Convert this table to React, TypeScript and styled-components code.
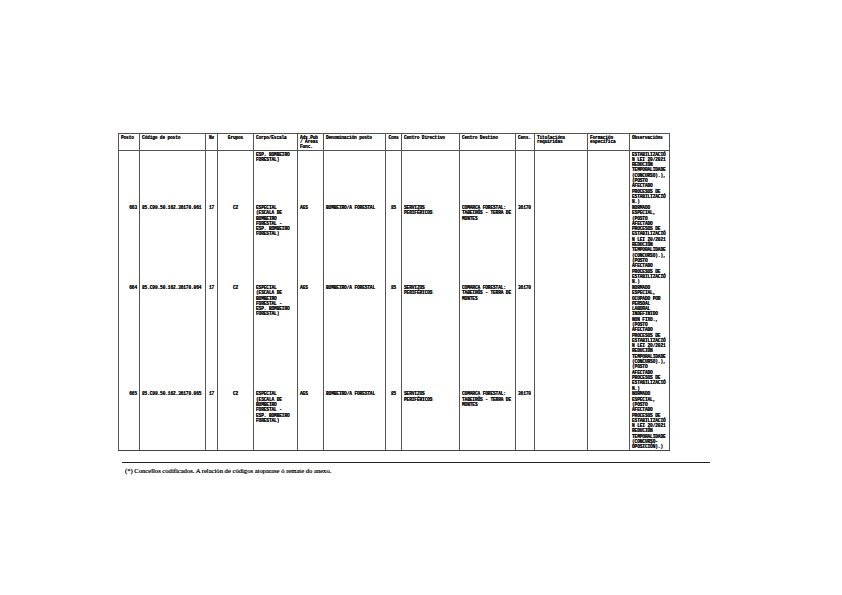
import React from 'react';
import styled, { createGlobalStyle } from 'styled-components';

const GlobalStyle = createGlobalStyle`
  html, body {
    margin: 0;
    padding: 0;
    background: #ffffff;
  }
`;

const Page = styled.div`
  width: 842px;
  height: 595px;
  box-sizing: border-box;
  padding: 133px 0 0 118px;
  background: #ffffff;
  overflow: hidden;
`;

const Table = styled.table`
  border-collapse: collapse;
  table-layout: fixed;
  width: 551px;
  font-family: "Liberation Mono", "Courier New", monospace;
  font-weight: bold;
  color: #111;
  text-shadow: 0 0 0.3px #000;
`;

const HeadCell = styled.th<{ $align?: string }>`
  border: 1px solid #555;
  border-bottom-width: 1.5px;
  height: 17px;
  box-sizing: border-box;
  padding: 1.5px 2px 0;
  vertical-align: top;
  text-align: ${({ $align }) => $align || 'left'};
  font-size: 4.5px;
  line-height: 4.7px;
  letter-spacing: -0.15px;
  font-weight: bold;
  white-space: pre;
  overflow: hidden;
`;

const Cell = styled.td<{ $align?: string; $last?: boolean }>`
  border-left: 1px solid #555;
  border-right: 1px solid #555;
  border-bottom: ${({ $last }) => ($last ? '1.5px solid #444' : 'none')};
  padding: 0.5px 2px 0;
  vertical-align: top;
  text-align: ${({ $align }) => $align || 'left'};
  font-size: 4.5px;
  line-height: 5.3px;
  letter-spacing: -0.12px;
  white-space: pre;
  overflow: hidden;
`;

const Footer = styled.div`
  width: 585px;
  margin: 11px 0 0 4px;
  border-top: 1.5px solid #222;
  padding: 4px 0 0 3px;
  font-family: "Liberation Serif", "Times New Roman", serif;
  font-size: 6.6px;
  color: #111;
  text-shadow: 0 0 0.2px #111;
`;

const columns = [
  { label: 'Posto', width: 21, align: 'left', cellAlign: 'right' },
  { label: 'Código de posto', width: 66 },
  { label: 'Nv', width: 12, align: 'center', cellAlign: 'center' },
  { label: 'Grupos', width: 36, align: 'center', cellAlign: 'center' },
  { label: 'Corpo/Escala', width: 44 },
  { label: 'Adx.Pub\n/ Áreas\nFunc.', width: 26 },
  { label: 'Denominación posto', width: 62 },
  { label: 'Cons', width: 16, align: 'center', cellAlign: 'center' },
  { label: 'Centro Directivo', width: 58 },
  { label: 'Centro Destino', width: 56 },
  { label: 'Cens.', width: 19 },
  { label: 'Titulacións\nrequiridas', width: 53 },
  { label: 'Formación\nespecífica', width: 42 },
  { label: 'Observacións', width: 40 },
];

const corpo = 'ESPECIAL\n(ESCALA DE\nBOMBEIRO\nFORESTAL -\nESP. BOMBEIRO\nFORESTAL)';
const destino = 'COMARCA FORESTAL:\nTABEIRÓS - TERRA DE\nMONTES';

const row = (posto: string, code: string, obs: string) => [
  posto,
  `85.C99.50.162.36170.${code}`,
  '17',
  'C2',
  corpo,
  'AGS',
  'BOMBEIRO/A FORESTAL',
  '85',
  'SERVIZOS\nPERIFÉRICOS',
  destino,
  '36170',
  '',
  '',
  obs,
];

const rows: string[][] = [
  [
    '', '', '', '', 'ESP. BOMBEIRO\nFORESTAL)', '', '', '', '', '', '', '', '',
    'ESTABILIZACIÓ\nN LEI 20/2021\nREDUCIÓN\nTEMPORALIDADE\n(CONCURSO).),\n(POSTO\nAFECTADO\nPROCESOS DE\nESTABILIZACIÓ\nN.)',
  ],
  row(
    '663',
    '061',
    'NORMADO\nESPECIAL,\n(POSTO\nAFECTADO\nPROCESOS DE\nESTABILIZACIÓ\nN LEI 20/2021\nREDUCIÓN\nTEMPORALIDADE\n(CONCURSO).),\n(POSTO\nAFECTADO\nPROCESOS DE\nESTABILIZACIÓ\nN.)'
  ),
  row(
    '664',
    '064',
    'NORMADO\nESPECIAL,\nOCUPADO POR\nPERSOAL\nLABORAL\nINDEFINIDO\nNON FIXO.,\n(POSTO\nAFECTADO\nPROCESOS DE\nESTABILIZACIÓ\nN LEI 20/2021\nREDUCIÓN\nTEMPORALIDADE\n(CONCURSO).),\n(POSTO\nAFECTADO\nPROCESOS DE\nESTABILIZACIÓ\nN.)'
  ),
  row(
    '665',
    '065',
    'NORMADO\nESPECIAL,\n(POSTO\nAFECTADO\nPROCESOS DE\nESTABILIZACIÓ\nN LEI 20/2021\nREDUCIÓN\nTEMPORALIDADE\n(CONCURSO-\nOPOSICIÓN).)'
  ),
];

const App: React.FC = () => {
  return (
    <Page>
      <GlobalStyle />
      <Table>
        <colgroup>
          {columns.map((c, i) => (
            <col key={i} style={{ width: c.width }} />
          ))}
        </colgroup>
        <thead>
          <tr>
            {columns.map((c, i) => (
              <HeadCell key={i} $align={c.align}>
                {c.label}
              </HeadCell>
            ))}
          </tr>
        </thead>
        <tbody>
          {rows.map((r, ri) => (
            <tr key={ri}>
              {r.map((v, ci) => (
                <Cell key={ci} $align={columns[ci].cellAlign} $last={ri === rows.length - 1}>
                  {v}
                </Cell>
              ))}
            </tr>
          ))}
        </tbody>
      </Table>
      <Footer>(*) Concellos codificados. A relación de códigos atoparase ó remate do anexo.</Footer>
    </Page>
  );
};

export default App;
